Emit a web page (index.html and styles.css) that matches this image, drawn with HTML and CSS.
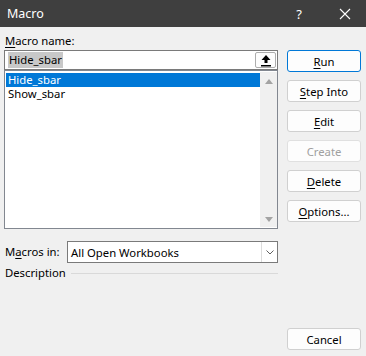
FILE: index.html
```html
<!DOCTYPE html>
<html lang="en">
<head>
  <meta charset="UTF-8">
  <title>Macro</title>
  <link rel="stylesheet" href="styles.css">
</head>
<body>
  <div class="dialog">
    <div class="title-bar">
      <span class="title">Macro</span>
      <span class="help">?</span>
      <svg class="close" width="12" height="12" viewBox="0 0 12 12">
        <path d="M1 1L11 11M11 1L1 11" stroke="#ffffff" stroke-width="1.1"/>
      </svg>
    </div>

    <div class="content">
      <div class="left">
        <div class="label"><u>M</u>acro name:</div>
        <div class="name-input">
          <span class="selected-text">Hide_sbar</span>
          <div class="upload-btn">
            <svg width="12" height="13" viewBox="0 0 12 13">
              <path d="M6 1L1.5 6H4.5V9H7.5V6H10.5Z" fill="#000"/>
              <rect x="1" y="11" width="10" height="1.5" fill="#000"/>
            </svg>
          </div>
        </div>
        <div class="list">
          <div class="list-items">
            <div class="item active">Hide_sbar</div>
            <div class="item">Show_sbar</div>
          </div>
          <div class="scrollbar">
            <span class="arrow up"></span>
            <span class="arrow down"></span>
          </div>
        </div>
        <div class="macros-in">
          <span class="label">M<u>a</u>cros in:</span>
          <div class="select">
            <span class="select-value">All Open Workbooks</span>
            <div class="select-btn">
              <svg width="8" height="5" viewBox="0 0 8 5">
                <path d="M0.5 0.5L4 4L7.5 0.5" stroke="#606060" stroke-width="1" fill="none"/>
              </svg>
            </div>
          </div>
        </div>
        <div class="description">
          <span class="label">Description</span>
          <div class="line"></div>
        </div>
      </div>

      <div class="right">
        <button class="btn default"><u>R</u>un</button>
        <button class="btn"><u>S</u>tep Into</button>
        <button class="btn"><u>E</u>dit</button>
        <button class="btn disabled">Create</button>
        <button class="btn"><u>D</u>elete</button>
        <button class="btn"><u>O</u>ptions...</button>
        <button class="btn cancel">Cancel</button>
      </div>
    </div>
  </div>
</body>
</html>
```

FILE: styles.css
```css
body {
  margin: 0;
  font-family: 'Noto Sans', 'Open Sans', sans-serif;
  font-size: 11.3px;
  color: #000;
  background-color: #f0f0f0;
}

.dialog {
  width: 366px;
  height: 356px;
  display: flex;
  flex-direction: column;
  background-color: #f0f0f0;
}

.title-bar {
  height: 27px;
  background-color: #3f3f3f;
  color: white;
  display: flex;
  align-items: center;
  padding: 0 15px 0 7px;
}

.title {
  flex: 1;
  font-size: 12.5px;
}

.help {
  font-size: 13px;
  margin-right: 37px;
}

.content {
  flex: 1;
  display: flex;
  padding: 6px 5px 6px 4px;
}

.left {
  width: 274px;
  display: flex;
  flex-direction: column;
}

.label {
  line-height: 16px;
  padding-left: 1px;
}

u {
  text-decoration-thickness: 1px;
  text-underline-offset: 2px;
}

.name-input {
  margin-top: 1px;
  height: 20px;
  box-sizing: border-box;
  border: 1px solid #7a7a7a;
  background-color: white;
  display: flex;
  align-items: center;
  padding: 0 1px 0 3px;
}

.selected-text {
  line-height: 16px;
  background-color: #c8c8c8;
  padding: 0 1px;
}

.name-input .upload-btn {
  margin-left: auto;
  width: 21px;
  height: 16px;
  box-sizing: border-box;
  border: 1px solid #adadad;
  border-radius: 2px;
  background-color: #fdfdfd;
  display: flex;
  align-items: center;
  justify-content: center;
}

.list {
  height: 159px;
  box-sizing: border-box;
  border: 1px solid #828790;
  background-color: white;
  display: flex;
  padding: 1px 0 1px 1px;
}

.list-items {
  flex: 1;
  padding-top: 1px;
}

.item {
  height: 14px;
  line-height: 14px;
  padding-left: 2px;
}

.item.active {
  background-color: #0078d7;
  color: white;
}

.scrollbar {
  width: 17px;
  background-color: #f0f0f0;
  display: flex;
  flex-direction: column;
  justify-content: space-between;
  align-items: center;
  padding: 7px 0 5px;
}

.arrow {
  width: 0;
  height: 0;
  border-left: 4.5px solid transparent;
  border-right: 4.5px solid transparent;
}

.arrow.up {
  border-bottom: 5px solid #a3a3a3;
}

.arrow.down {
  border-top: 5px solid #a3a3a3;
}

.macros-in {
  margin-top: 12px;
  display: flex;
  align-items: center;
}

.macros-in .label {
  width: 62px;
}

.select {
  flex: 1;
  height: 22px;
  box-sizing: border-box;
  border: 1px solid #7a7a7a;
  background-color: white;
  display: flex;
  align-items: center;
}

.select-value {
  flex: 1;
  padding-left: 3px;
}

.select-btn {
  width: 16px;
  height: 20px;
  box-sizing: border-box;
  border-left: 1px solid #dcdcdc;
  display: flex;
  align-items: center;
  justify-content: center;
}

.description {
  margin-top: 2px;
  display: flex;
  align-items: center;
}

.description .line {
  flex: 1;
  height: 1px;
  background-color: #d9d9d9;
  margin-left: 5px;
}

.right {
  width: 74px;
  margin-left: 9px;
  padding-top: 17px;
  display: flex;
  flex-direction: column;
  gap: 8px;
}

.btn {
  height: 22px;
  font-family: inherit;
  font-size: 11.3px;
  color: #000;
  background-color: #fdfdfd;
  border: 1px solid #d0d0d0;
  border-radius: 3px;
  padding: 0;
}

.btn.default {
  border-color: #0078d7;
}

.btn.disabled {
  color: #a0a0a0;
  border-color: #e0e0e0;
}

.btn.cancel {
  margin-top: auto;
}
```
